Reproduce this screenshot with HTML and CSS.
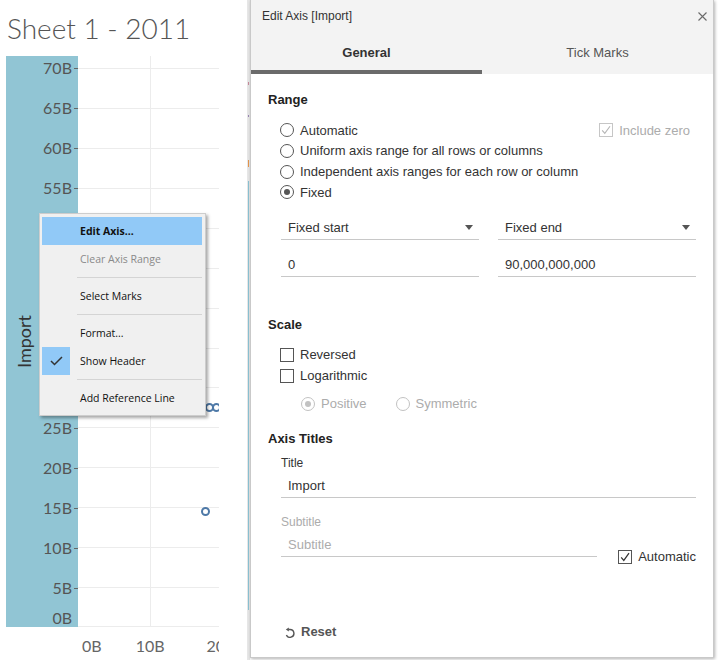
FILE: index.html
```html
<!DOCTYPE html>
<html lang="en">
<head>
<meta charset="utf-8">
<title>Edit Axis</title>
<link rel="stylesheet" href="styles.css">
</head>
<body>
<div class="app">
  <section class="sheet">
    <h1 class="sheet-title">Sheet 1 - 2011</h1>
    <div class="chart">
      <div class="row-header">
        <div class="field-title"><span>Import</span></div>
        <div class="axis">
          <div class="tick">70B</div>
          <div class="tick">65B</div>
          <div class="tick">60B</div>
          <div class="tick">55B</div>
          <div class="tick">50B</div>
          <div class="tick">45B</div>
          <div class="tick">40B</div>
          <div class="tick">35B</div>
          <div class="tick">30B</div>
          <div class="tick">25B</div>
          <div class="tick">20B</div>
          <div class="tick">15B</div>
          <div class="tick">10B</div>
          <div class="tick">5B</div>
          <div class="tick zero">0B</div>
        </div>
      </div>
      <div class="pane">
        <span class="mark m1"></span>
        <span class="mark m2"></span>
        <span class="mark m3"></span>
      </div>
    </div>
    <div class="x-axis">
      <span class="xl first">0B</span>
      <span class="xl second">10B</span>
      <span class="xl third">20B</span>
    </div>
  </section>
  <div class="splitter">
    <span class="seg pink"></span>
    <span class="seg purple"></span>
    <span class="seg orange"></span>
    <span class="seg blue"></span>
  </div>
</div>

<div class="menu">
  <div class="mi hl"><span class="ic"></span>Edit Axis...</div>
  <div class="mi dis"><span class="ic"></span>Clear Axis Range</div>
  <div class="sep"><span></span></div>
  <div class="mi"><span class="ic"></span>Select Marks</div>
  <div class="sep"><span></span></div>
  <div class="mi"><span class="ic"></span>Format...</div>
  <div class="mi"><span class="ic checked"><svg width="13" height="10" viewBox="0 0 13 10"><path d="M1 5 L4.5 8.5 L12 1" fill="none" stroke="#333" stroke-width="1.5"/></svg></span>Show Header</div>
  <div class="sep"><span></span></div>
  <div class="mi"><span class="ic"></span>Add Reference Line</div>
</div>

<div class="dialog">
  <div class="dlg-head">
    <span>Edit Axis [Import]</span>
    <svg class="close" width="9" height="9" viewBox="0 0 9 9"><path d="M0.5 0.5 L8.5 8.5 M8.5 0.5 L0.5 8.5" stroke="#6a6a6a" stroke-width="1.1"/></svg>
  </div>
  <div class="tabs">
    <div class="tab active">General</div>
    <div class="tab">Tick Marks</div>
  </div>
  <div class="dlg-body">
    <div class="h">Range</div>
    <div class="radios">
      <div class="opt"><span class="radio"></span><span>Automatic</span>
        <span class="incl"><span class="checkbox disabled"><svg width="12" height="12" viewBox="0 0 12 12"><path d="M2.2 6.3 L4.8 9.4 L10 2.2" fill="none" stroke="#b5b5b5" stroke-width="1.1"/></svg></span><span>Include zero</span></span>
      </div>
      <div class="opt"><span class="radio"></span><span>Uniform axis range for all rows or columns</span></div>
      <div class="opt"><span class="radio"></span><span>Independent axis ranges for each row or column</span></div>
      <div class="opt"><span class="radio on"></span><span>Fixed</span></div>
    </div>
    <div class="range-fields">
      <div class="field select"><span>Fixed start</span><svg width="8" height="5" viewBox="0 0 8 5"><path d="M0 0 H8 L4 5 Z" fill="#555"/></svg></div>
      <div class="field select"><span>Fixed end</span><svg width="8" height="5" viewBox="0 0 8 5"><path d="M0 0 H8 L4 5 Z" fill="#555"/></svg></div>
      <div class="field"><span>0</span></div>
      <div class="field"><span>90,000,000,000</span></div>
    </div>

    <div class="h scale-h">Scale</div>
    <div class="checks">
      <div class="opt"><span class="checkbox"></span><span>Reversed</span></div>
      <div class="opt"><span class="checkbox"></span><span>Logarithmic</span></div>
    </div>
    <div class="subopts">
      <span class="subopt"><span class="radio disabled on"></span><span>Positive</span></span>
      <span class="subopt sym"><span class="radio disabled"></span><span>Symmetric</span></span>
    </div>

    <div class="h titles-h">Axis Titles</div>
    <div class="title-block">
      <div class="lbl">Title</div>
      <div class="field"><span>Import</span></div>
      <div class="sub-row">
        <div class="sub-col">
          <div class="lbl muted">Subtitle</div>
          <div class="field"><span class="muted">Subtitle</span></div>
        </div>
        <div class="auto"><span class="checkbox"><svg width="12" height="12" viewBox="0 0 12 12"><path d="M2.2 6.3 L4.8 9.4 L10 2.2" fill="none" stroke="#333" stroke-width="1.2"/></svg></span><span>Automatic</span></div>
      </div>
    </div>

    <div class="reset">
      <svg width="10" height="11" viewBox="0 0 10 11"><path d="M3.4 2.5 H5 A3.9 3.9 0 1 1 1.4 7.9" fill="none" stroke="#555" stroke-width="1.4"/><path d="M0.8 2.5 L3.8 0.4 L3.8 4.6 Z" fill="#555"/></svg>
      <span>Reset</span>
    </div>
  </div>
</div>
</body>
</html>
```
FILE: styles.css
```css
* { box-sizing: border-box; margin: 0; padding: 0; }
html, body { width: 718px; height: 660px; overflow: hidden; background: #fff; }
body { position: relative; font-family: "Liberation Sans", Arial, sans-serif; }

.app { display: flex; height: 660px; }

/* ---------- worksheet ---------- */
.sheet { width: 247px; display: flex; flex-direction: column; }
.sheet-title {
  height: 56px; padding: 12px 0 0 7px;
  font-family: Lato, "Open Sans", sans-serif; font-weight: 300;
  font-size: 28px; line-height: 33px; color: #555; white-space: nowrap;
}
.chart { display: flex; height: 571px; margin-left: 6px; }
.row-header { width: 72px; background: #91c5d4; display: flex; overflow: hidden; }
.field-title { width: 35px; display: flex; align-items: center; justify-content: center; }
.field-title span {
  writing-mode: vertical-rl; transform: rotate(180deg);
  font-family: Lato, sans-serif; font-size: 18px; color: #333; line-height: 1;
}
.axis { width: 37px; margin-top: -8px; display: flex; flex-direction: column; }
.tick {
  height: 40px; flex: none; display: flex; align-items: center; justify-content: flex-end;
  font-family: Lato, sans-serif; font-size: 16px; color: #555; line-height: 1;
}
.tick::after { content: ""; width: 4px; height: 1px; background: #666; margin-left: 2px; }
.tick.zero { height: 19px; }
.tick.zero::after { background: transparent; }

.pane {
  width: 141px; height: 571px; position: relative; overflow: hidden;
  background-image:
    linear-gradient(to right, transparent 72px, #ececec 72px, #ececec 73px, transparent 73px),
    repeating-linear-gradient(to bottom, transparent 0, transparent 12px, #ececec 12px, #ececec 13px, transparent 13px, transparent 39.93px);
  border-bottom: 1px solid #ececec;
}
.mark {
  position: absolute; width: 9px; height: 9px; border: 2px solid #4e79a7; border-radius: 50%;
}
.m1 { left: 123px; top: 451px; }
.m2 { left: 127px; top: 347px; }
.m3 { left: 134px; top: 347px; }

.x-axis {
  width: 219px; height: 33px; overflow: hidden; display: flex; align-items: center;
  padding: 4px 0 0 82px; white-space: nowrap;
  font-family: Lato, sans-serif; font-size: 16px; color: #666;
}
.xl.second { margin-left: 34px; }
.xl.third { margin-left: 42px; }

.splitter { width: 3px; background: #e6e6e6; display: flex; flex-direction: column; align-items: center; }
.seg { display: block; width: 1px; flex: none; }
.seg.pink { margin-top: 82px; height: 3px; background: #c98a9a; }
.seg.purple { margin-top: 30px; height: 2px; background: #9a86b4; }
.seg.orange { margin-top: 43px; height: 7px; background: #e6964d; }
.seg.blue { margin-top: 14px; height: 429px; background: #8cc3d4; }

/* ---------- context menu ---------- */
.menu {
  position: absolute; left: 39px; top: 213px; width: 167px;
  background: #f0f0f0; border: 1px solid #cdcdcd;
  box-shadow: 2px 2px 3px rgba(0, 0, 0, 0.35);
  padding: 3px 3px 3px 2px;
  font-family: "Open Sans", "Liberation Sans", sans-serif; font-size: 10.5px; color: #111;
}
.mi { height: 28px; display: flex; align-items: center; white-space: nowrap; }
.mi .ic { width: 28px; height: 28px; flex: none; margin-right: 10px; display: flex; align-items: center; justify-content: center; }
.mi .ic.checked { background: #91c9f7; }
.mi.hl { background: #91c9f7; font-weight: bold; }
.mi.dis { color: #8a8a8a; }
.sep { height: 9px; display: flex; align-items: center; padding-left: 35px; }
.sep span { display: block; height: 1px; flex: 1; background: #d4d4d4; }

/* ---------- dialog ---------- */
.dialog {
  position: absolute; left: 250px; top: 0; width: 464px; height: 658px;
  background: #fff; border: 1px solid #c9c9c9; border-top: none;
  box-shadow: 1px 1px 3px rgba(0, 0, 0, 0.3);
  display: flex; flex-direction: column;
  font-size: 13px; color: #333;
}
.dlg-head {
  height: 32px; flex: none; background: #f3f3f3;
  display: flex; align-items: center; justify-content: space-between;
  padding: 0 6px 0 11px; font-size: 12px; color: #333;
}
.tabs { height: 42px; flex: none; display: flex; background: #f3f3f3; }
.tab {
  flex: 1; display: flex; align-items: center; justify-content: center;
  padding-top: 3px; border-bottom: 4px solid transparent; color: #555;
}
.tab.active { font-weight: bold; color: #333; border-bottom-color: #6b6b6b; }

.dlg-body { flex: 1; display: flex; flex-direction: column; padding: 18px 17px 17px; }
.h { font-weight: bold; line-height: 16px; color: #222; }
.scale-h { margin-top: 40px; }
.titles-h { margin-top: 16.5px; }

.radios { margin-top: 12px; padding-left: 12px; }
.opt { height: 20.67px; display: flex; align-items: center; gap: 6px; white-space: nowrap; }
.radio {
  width: 14px; height: 14px; flex: none; border: 1px solid #555; border-radius: 50%;
  display: flex; align-items: center; justify-content: center;
}
.radio.on::after { content: ""; width: 6px; height: 6px; border-radius: 50%; background: #555; }
.radio.disabled { border-color: #c2c2c2; }
.radio.disabled.on::after { background: #c2c2c2; }

.checkbox {
  width: 14px; height: 14px; flex: none; border: 1px solid #555;
  display: flex; align-items: center; justify-content: center;
}
.checkbox.disabled { border-color: #c6c6c6; }
.incl { margin-left: auto; margin-right: 6px; display: flex; align-items: center; gap: 6px; color: #acacac; }

.range-fields {
  margin-top: 11.3px; padding-left: 13px;
  display: grid; grid-template-columns: 1fr 1fr; column-gap: 19px; row-gap: 11px;
}
.field {
  height: 26px; display: flex; align-items: center; padding: 2px 7px 0;
  border-bottom: 1px solid #c8c8c8; color: #333; white-space: nowrap;
}
.field.select { justify-content: space-between; padding-right: 6px; }

.checks { margin-top: 11.5px; padding-left: 12px; }
.checks .opt { height: 21px; }
.subopts { margin-top: 7px; padding-left: 33px; height: 21px; display: flex; align-items: center; color: #acacac; }
.subopt { display: flex; align-items: center; gap: 6px; }
.subopt.sym { margin-left: 29px; }

.title-block { padding-left: 13px; }
.lbl { font-size: 12px; line-height: 16px; margin-top: 8px; margin-bottom: 1px; color: #333; }
.muted { color: #acacac; }
.sub-row { display: flex; align-items: flex-end; margin-top: 7.7px; }
.sub-col { width: 319px; }
.sub-col .field { margin-top: 0.3px; }
.auto { display: flex; align-items: center; gap: 6px; height: 14px; margin: 0 0 -7px 21px; white-space: nowrap; }

.reset {
  margin-top: auto; padding-left: 17px; display: flex; align-items: center; gap: 6px;
  font-weight: bold; color: #555; line-height: 16px;
}
```
